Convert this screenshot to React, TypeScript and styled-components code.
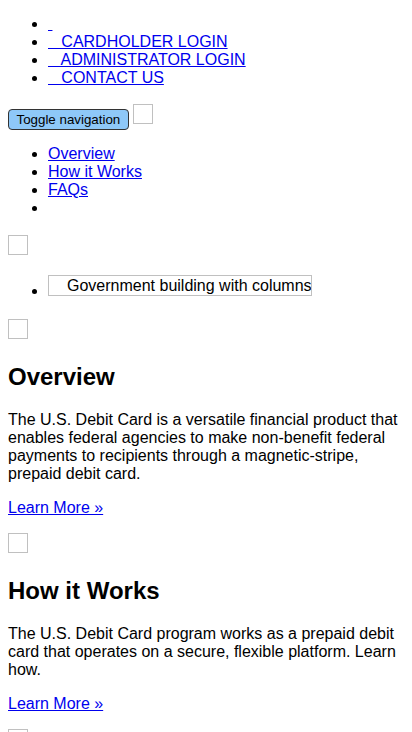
import React from "react";
import styled, { createGlobalStyle } from "styled-components";

const Global = createGlobalStyle`
  html, body {
    margin: 0;
    padding: 0;
  }
  body {
    padding: 0 8px 8px;
    font-family: "Liberation Sans", Arial, sans-serif;
    font-size: 16px;
    line-height: 18px;
    color: #000;
    background: #fff;
  }
`;

const List = styled.ul<{ $top?: number; $bottom?: number }>`
  margin: ${(p) => p.$top ?? 16}px 0 ${(p) => p.$bottom ?? 16}px;
  padding-left: 40px;
`;

const Item = styled.li`
  list-style: disc;
`;

const Link = styled.a`
  color: #0000ee;
  text-decoration: underline;
  white-space: pre;
`;

const ToggleRow = styled.div`
  height: 25px;
`;

const ToggleButton = styled.button`
  font-family: "Liberation Sans", Arial, sans-serif;
  font-size: 13.33px;
  line-height: 15px;
  color: #000;
  background: #8ec8f8;
  border: 1px solid #333;
  border-radius: 4px;
  padding: 1px 7.5px;
  margin: 0 4px 0 0;
  height: 21px;
`;

const Broken = styled.span`
  display: inline-block;
  box-sizing: border-box;
  width: 20px;
  height: 20px;
  border: 1px solid #c0c0c0;
  vertical-align: baseline;
`;

const AltBox = styled.span`
  display: inline-block;
  box-sizing: border-box;
  height: 21px;
  width: 264px;
  padding: 1px 0 0 18px;
  border: 1px solid #c0c0c0;
  overflow: hidden;
  white-space: nowrap;
  vertical-align: baseline;
`;

const Block = styled.div``;

const Heading = styled.h2`
  font-size: 24px;
  line-height: 28px;
  font-weight: bold;
  margin: 19.92px 0;
`;

const Para = styled.p`
  margin: 16px 0;
`;

export default function App() {
  return (
    <>
      <Global />
      <List $top={15} $bottom={17}>
        <Item>
          <Link href="#"> </Link>
        </Item>
        <Item>
          <Link href="#">   CARDHOLDER LOGIN</Link>
        </Item>
        <Item>
          <Link href="#">   ADMINISTRATOR LOGIN</Link>
        </Item>
        <Item>
          <Link href="#">   CONTACT US</Link>
        </Item>
      </List>
      <ToggleRow>
        <ToggleButton>Toggle navigation</ToggleButton>
        <Broken />
      </ToggleRow>
      <List $bottom={18}>
        <Item>
          <Link href="#">Overview</Link>
        </Item>
        <Item>
          <Link href="#">How it Works</Link>
        </Item>
        <Item>
          <Link href="#">FAQs</Link>
        </Item>
        <Item />
      </List>
      <Block>
        <Broken />
      </Block>
      <List $bottom={19}>
        <Item>
          <AltBox>Government building with columns</AltBox>
        </Item>
      </List>
      <Block>
        <Broken />
      </Block>
      <Heading>Overview</Heading>
      <Para>
        The U.S. Debit Card is a versatile financial product that enables
        federal agencies to make non-benefit federal payments to recipients
        through a magnetic-stripe, prepaid debit card.
      </Para>
      <Para>
        <Link href="#">Learn More »</Link>
      </Para>
      <Block>
        <Broken />
      </Block>
      <Heading>How it Works</Heading>
      <Para>
        The U.S. Debit Card program works as a prepaid debit card that
        operates on a secure, flexible platform. Learn how.
      </Para>
      <Para>
        <Link href="#">Learn More »</Link>
      </Para>
      <Block>
        <Broken />
      </Block>
    </>
  );
}
